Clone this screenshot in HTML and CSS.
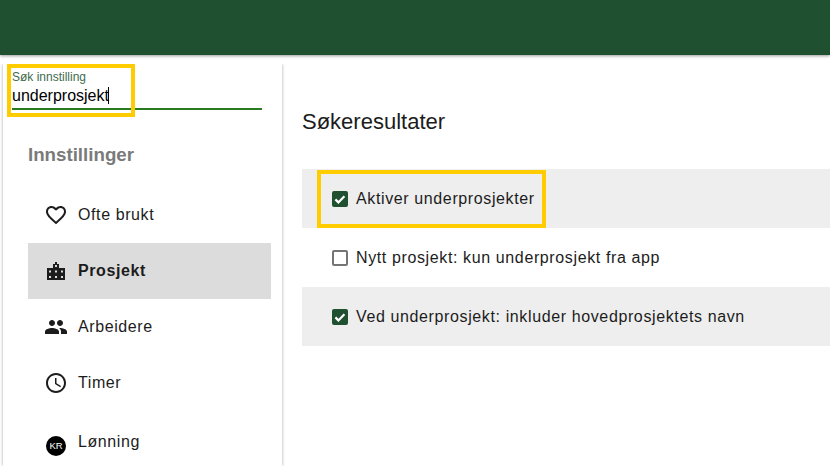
FILE: index.html
```html
<!DOCTYPE html>
<html lang="en">
<head>
  <meta charset="UTF-8">
  <title>Innstillinger</title>
  <link rel="stylesheet" href="styles.css">
</head>
<body>
  <!-- Top bar -->
  <div class="topbar"></div>

  <div class="page">
    <!-- Sidebar -->
    <div class="sidebar">
      <div class="search">
        <div class="search-label">Søk innstilling</div>
        <div class="search-value">underprosjekt<span class="caret"></span></div>
        <div class="highlight highlight-search"></div>
      </div>
      <h2 class="menu-title">Innstillinger</h2>
      <div class="menu-item">
        <svg class="menu-icon" viewBox="0 0 24 24"><path d="M16.5 3c-1.74 0-3.41.81-4.5 2.09C10.91 3.81 9.24 3 7.5 3 4.42 3 2 5.42 2 8.5c0 3.78 3.4 6.86 8.55 11.54L12 21.35l1.45-1.32C18.6 15.36 22 12.28 22 8.5 22 5.42 19.58 3 16.5 3zm-4.4 15.55l-.1.1-.1-.1C7.14 14.24 4 11.39 4 8.5 4 6.5 5.5 5 7.5 5c1.54 0 3.04.99 3.57 2.36h1.87C13.46 5.99 14.96 5 16.5 5c2 0 3.5 1.5 3.5 3.5 0 2.89-3.14 5.74-7.9 10.05z"/></svg>
        <span>Ofte brukt</span>
      </div>
      <div class="menu-item active">
        <svg class="menu-icon" viewBox="0 0 24 24"><path fill-rule="evenodd" d="M3 21V9h6V5h2V3h2v2h2v4h6v12H3zM5 13.5h2v-2H5v2zm0 5.5h2v-2H5v2zm6-11h2V6h-2v2zm0 5.5h2v-2h-2v2zm0 5.5h2v-2h-2v2zm6-5.5h2v-2h-2v2zm0 5.5h2v-2h-2v2z"/></svg>
        <span>Prosjekt</span>
      </div>
      <div class="menu-item">
        <svg class="menu-icon" viewBox="0 0 24 24"><path d="M16 11c1.66 0 2.99-1.34 2.99-3S17.66 5 16 5c-1.66 0-3 1.34-3 3s1.34 3 3 3zm-8 0c1.66 0 2.99-1.34 2.99-3S9.66 5 8 5C6.34 5 5 6.34 5 8s1.34 3 3 3zm0 2c-2.33 0-7 1.17-7 3.5V19h14v-2.5c0-2.33-4.67-3.5-7-3.5zm8 0c-.29 0-.62.02-.97.05 1.16.84 1.97 1.97 1.97 3.45V19h6v-2.5c0-2.33-4.67-3.5-7-3.5z"/></svg>
        <span>Arbeidere</span>
      </div>
      <div class="menu-item">
        <svg class="menu-icon" viewBox="0 0 24 24"><path d="M11.99 2C6.47 2 2 6.48 2 12s4.47 10 9.99 10C17.52 22 22 17.52 22 12S17.52 2 11.99 2zM12 20c-4.42 0-8-3.58-8-8s3.58-8 8-8 8 3.58 8 8-3.58 8-8 8zm.5-13H11v6l5.25 3.15.75-1.23-4.5-2.67V7z"/></svg>
        <span>Timer</span>
      </div>
      <div class="menu-item menu-item-low">
        <div class="kr-icon">KR</div>
        <span>Lønning</span>
      </div>
    </div>

    <!-- Search results -->
    <div class="content">
      <h1 class="results-title">Søkeresultater</h1>
      <div class="result-row shaded">
        <span class="checkbox checked"><svg viewBox="0 0 16 16"><path d="M3.4 8.4l3 3 6-6.2" /></svg></span>
        <span>Aktiver underprosjekter</span>
        <div class="highlight highlight-result"></div>
      </div>
      <div class="result-row">
        <span class="checkbox"></span>
        <span>Nytt prosjekt: kun underprosjekt fra app</span>
      </div>
      <div class="result-row shaded">
        <span class="checkbox checked"><svg viewBox="0 0 16 16"><path d="M3.4 8.4l3 3 6-6.2" /></svg></span>
        <span>Ved underprosjekt: inkluder hovedprosjektets navn</span>
      </div>
    </div>
  </div>
</body>
</html>
```

FILE: styles.css
```css
html, body {
  margin: 0;
  padding: 0;
  height: 466px;
  overflow: hidden;
  background: white;
  font-family: "Liberation Sans", Arial, sans-serif;
  color: #1c1c1c;
}

/* Top bar */
.topbar {
  height: 55px;
  background-color: #1f5130;
  box-shadow: 0 1px 3px rgba(0, 0, 0, 0.4);
}

.page {
  display: flex;
  height: 411px;
}

/* Sidebar */
.sidebar {
  width: 279px;
  height: 402px;
  margin: 9px 0 0 3px;
  flex-shrink: 0;
  box-shadow: 0 0 3px rgba(0, 0, 0, 0.35);
  clip-path: inset(0 -4px -20px -4px);
}

.search {
  position: relative;
  margin-left: 9px;
  width: 250px;
  height: 44px;
  border-bottom: 2px solid #2a7a22;
}

.search-label {
  padding-top: 7px;
  font-size: 12px;
  line-height: 13px;
  color: #3f6b4c;
}

.search-value {
  font-size: 16px;
  line-height: 20px;
  margin-top: 2px;
  color: black;
}

.caret {
  display: inline-block;
  width: 1px;
  height: 17px;
  margin-left: -1px;
  background: black;
  vertical-align: -3px;
}

.menu-title {
  margin: 34px 0 22px 25px;
  font-size: 18.72px;
  line-height: 21px;
  font-weight: bold;
  color: #7a7a7a;
}

.menu-item {
  display: flex;
  align-items: center;
  gap: 12px;
  height: 56px;
  width: 225px;
  margin-left: 25px;
  padding-left: 18px;
  font-size: 16px;
  letter-spacing: 0.6px;
}

.menu-item.active {
  background-color: #dcdcdc;
  font-weight: bold;
}

.menu-item-low {
  height: 50px;
  padding-top: 6px;
}

.menu-icon {
  width: 24px;
  height: 24px;
  margin: 0 -2px;
  fill: #1c1c1c;
  flex-shrink: 0;
}

.kr-icon {
  width: 20px;
  height: 20px;
  margin-top: 8px;
  border-radius: 50%;
  background: black;
  color: white;
  font-size: 9.5px;
  line-height: 20px;
  letter-spacing: 0;
  text-align: center;
  flex-shrink: 0;
}

/* Results */
.content {
  flex: 1;
  margin-left: 20px;
}

.results-title {
  margin: 0;
  padding: 55px 0 35px;
  font-size: 22px;
  line-height: 24px;
  font-weight: normal;
  color: #1c1c1c;
}

.result-row {
  position: relative;
  display: flex;
  align-items: center;
  gap: 8px;
  height: 59px;
  padding-left: 30px;
  font-size: 16px;
  letter-spacing: 0.62px;
}

.shaded {
  background-color: #eeeeee;
}

.checkbox {
  width: 12px;
  height: 12px;
  border: 2px solid #757575;
  border-radius: 2px;
  background: white;
  flex-shrink: 0;
}

.checkbox.checked {
  width: 16px;
  height: 16px;
  border: none;
  background: #1f5130;
}

.checkbox svg {
  display: block;
  width: 16px;
  height: 16px;
  fill: none;
  stroke: white;
  stroke-width: 2.2;
}

/* Yellow annotation boxes */
.highlight {
  position: absolute;
  border: 4px solid #ffcc00;
  box-sizing: border-box;
  pointer-events: none;
}

.highlight-search {
  left: -5px;
  top: 0;
  width: 128px;
  height: 53px;
}

.highlight-result {
  left: 15px;
  top: 1px;
  width: 229px;
  height: 58px;
}
```
